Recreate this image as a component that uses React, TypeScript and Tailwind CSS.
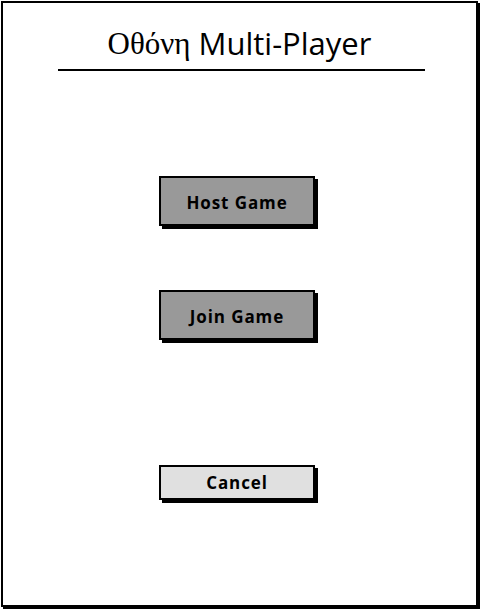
const Button = ({ label, light }: { label: string; light?: boolean }) => (
  <button
    type="button"
    className={`w-[156px] border-2 border-black shadow-[3px_3px_0_#000] text-[17px] font-bold tracking-[0.9px] text-black ${
      light ? "h-[35px] pt-[1px] bg-[#e0e0e0]" : "h-[50px] pt-[3px] bg-[#999999]"
    }`}
    style={{ fontFamily: '"Open Sans", "Liberation Sans", sans-serif' }}
  >
    {label}
  </button>
);

export default function App() {
  return (
    <div className="w-[481px] h-[610px] bg-white">
      <div className="ml-[1px] mt-[1px] w-[477px] h-[606px] border-2 border-black shadow-[2px_2px_0_#000] flex flex-col items-center">
        <h1 className="mt-[21px] h-[38px] flex items-center text-[31px] leading-none text-black">
          <span style={{ fontFamily: '"Liberation Serif", "DejaVu Serif", serif' }}>Οθόνη</span>
          <span className="ml-[8px]" style={{ fontFamily: '"Open Sans", "Liberation Sans", sans-serif' }}>
            Multi-Player
          </span>
        </h1>
        <div className="mt-[7px] w-[367px] h-[2px] bg-black ml-[3px]" />
        <div className="mt-[105px] mr-[5px] flex flex-col items-center">
          <Button label="Host Game" />
          <div className="h-[64px]" />
          <Button label="Join Game" />
          <div className="h-[125px]" />
          <Button label="Cancel" light />
        </div>
      </div>
    </div>
  );
}
